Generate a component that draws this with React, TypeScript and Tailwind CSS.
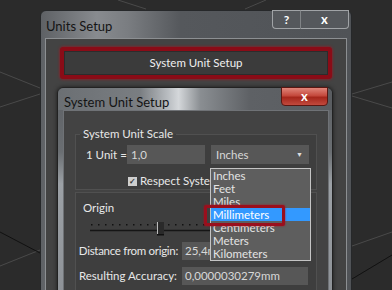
import React from 'react';

const font = { fontFamily: 'Lato, "Noto Sans", Arial, sans-serif' };

const Background: React.FC = () => (
    <svg className="absolute inset-0" width="392" height="290" viewBox="0 0 392 290">
        <g stroke="#4a4a4a" strokeWidth="1" fill="none">
            <line x1="118" y1="0" x2="146" y2="9" />
            <line x1="245" y1="9" x2="266" y2="0" />
            <line x1="0" y1="72" x2="40" y2="88" />
            <line x1="0" y1="107" x2="40" y2="94" />
            <line x1="0" y1="266" x2="40" y2="250" />
            <line x1="352" y1="94" x2="392" y2="82" />
            <line x1="352" y1="96" x2="392" y2="108" />
            <line x1="352" y1="246" x2="392" y2="232" />
        </g>
        <g stroke="#111" strokeWidth="1" fill="none">
            <line x1="0" y1="232" x2="40" y2="253" />
            <line x1="352" y1="279" x2="392" y2="255" />
        </g>
    </svg>
);

const Slider: React.FC = () => (
    <svg width="130" height="16" viewBox="0 0 130 16" className="block">
        {Array.from({ length: 18 }).map((_, i) => (
            <rect key={i} x={1 + i * 7} y={3} width={1.5} height={1.5} fill="#111" />
        ))}
        <line x1="0" y1="9.5" x2="130" y2="9.5" stroke="#151515" strokeWidth="1.5" />
        <rect x="67" y="1" width="7" height="13" fill="#2a2a2a" />
        <rect x="67" y="1" width="1" height="13" fill="#bbb" />
        <rect x="67" y="13" width="7" height="1.5" fill="#111" />
    </svg>
);

const App: React.FC = () => {
    const units = ['Inches', 'Feet', 'Miles', 'Millimeters', 'Centimeters', 'Meters', 'Kilometers'];

    return (
        <div className="relative w-[392px] h-[290px] overflow-hidden bg-[#2b2b2b]" style={font}>
            <Background />

            {/* Units Setup window */}
            <div className="absolute left-[40px] top-[10px] w-[312px] h-[290px] rounded-t-[6px] border border-[#26282a] bg-[linear-gradient(to_right,#5e6165_0%,#888b8f_18%,#7a7d81_28%,#55585c_45%,#505357_100%)] flex flex-col">
                <div className="h-[27px] flex items-start justify-between">
                    <span className="pl-[5px] pt-[7px] text-[13px] leading-[16px] text-[#141414]">Units Setup</span>
                    <div className="flex mr-[2px] -mt-px">
                        <div className="w-[29px] h-[19px] border border-[#a0a3a6] border-r-[#808386] rounded-bl-[4px] bg-[#55585c] flex items-center justify-center text-white text-[12px] font-bold leading-none">?</div>
                        <div className="w-[48px] h-[19px] border border-l-0 border-[#a0a3a6] rounded-br-[4px] bg-[#55585c] flex items-center justify-center text-white text-[13px] font-bold leading-none">x</div>
                    </div>
                </div>
                <div className="mx-[4px] flex-1 border border-[#8c8f92] bg-[#434343] pt-[8px] px-[14px]">
                    <div className="border-[4px] border-[#8a0c17] rounded-[3px] shadow-[0_0_3px_#b0101c]">
                        <div className="h-[24px] bg-[#3b3b3b] border border-[#2c2c2c] flex items-center justify-center text-[11.5px] text-[#f0f0f0]">System Unit Setup</div>
                    </div>
                </div>
            </div>

            {/* System Unit Setup window */}
            <div className="absolute left-[57px] top-[87px] w-[276px] h-[215px] rounded-t-[6px] border border-[#222] bg-[linear-gradient(to_bottom,#5d6064_0%,#6a6e72_30%,#9ca1a6_45%,#8d9196_100%)] flex flex-col shadow-[0_0_4px_rgba(0,0,0,0.6)]">
                <div className="h-[27px] flex items-start justify-between rounded-t-[6px] bg-[linear-gradient(to_right,#6b6f73_0%,#7a7e82_30%,#b8bcc0_40%,#d4d7da_44%,#8a8e92_52%,#5e6165_70%,#5a5d61_100%)]">
                    <span className="pl-[6px] pt-[6px] text-[13px] leading-[16px] text-[#141414]">System Unit Setup</span>
                    <div className="w-[47px] h-[19px] mr-[4px] -mt-px rounded-b-[4px] border border-[#5a1712] bg-[linear-gradient(to_bottom,#e0857a_0%,#c4483c_45%,#a5261b_55%,#c24a3e_100%)] flex items-center justify-center text-white text-[13px] font-bold leading-none">x</div>
                </div>
                <div className="ml-[5px] mr-[3px] flex-1 border border-[#6f7276] bg-[#434343] px-[11px] text-[11.5px] leading-[16px] text-[#e8e8e8]">
                    <fieldset className="mt-[15px] border border-[#505050] bg-[#3e3e3e] pl-[10px] pr-[6px] pb-[1px]">
                        <legend className="px-[3px] -ml-[6px]">System Unit Scale</legend>
                        <div className="flex items-center mt-[3px]">
                            <span className="w-[41px] whitespace-nowrap">1 Unit =</span>
                            <div className="w-[78px] h-[19px] bg-[#575757] flex items-center pl-[4px] text-[#d8d8d8]">1,0</div>
                            <div className="ml-[6px] w-[98px] h-[19px] bg-[#575757] flex items-center justify-between pl-[5px] pr-[6px] text-[#d8d8d8]">
                                <span>Inches</span>
                                <span className="text-[7px] leading-none text-[#ddd]">▼</span>
                            </div>
                        </div>
                        <div className="flex items-center ml-[42px] mt-[10px] h-[14px]">
                            <span className="w-[9px] h-[9px] bg-[#cfcfcf] flex items-center justify-center text-[8px] leading-none text-[#333] font-bold">✓</span>
                            <span className="ml-[3px] whitespace-nowrap">Respect System Units in Files</span>
                        </div>
                    </fieldset>
                    <div className="mt-[2px] h-[110px] border border-[#505050] bg-[#3e3e3e] pl-[4px] pt-[7px]">
                        <div className="pl-[3px]">Origin</div>
                        <div className="ml-[10px] mt-[5px]">
                            <Slider />
                        </div>
                        <div className="flex items-center mt-[5px]">
                            <span className="w-[102px] flex justify-end pr-[4px] whitespace-nowrap tracking-[-0.3px]">Distance from origin:</span>
                            <div className="w-[126px] h-[18px] bg-[#575757] flex items-center pl-[3px] text-[#d8d8d8]">25,4mm</div>
                        </div>
                        <div className="flex items-center mt-[7px]">
                            <span className="w-[102px] flex justify-end pr-[5px] whitespace-nowrap">Resulting Accuracy:</span>
                            <div className="w-[126px] h-[18px] bg-[#575757] flex items-center pl-[3px] text-[#d8d8d8]">0,0000030279mm</div>
                        </div>
                    </div>
                </div>
            </div>

            {/* Open dropdown list */}
            <div className="absolute left-[210px] top-[168px] w-[101px] border border-[#c4c4c4] bg-[#5e5e5e] text-[11.5px] leading-[13px] text-[#e4e4e4]">
                {units.map((u) => (
                    <div key={u} className={u === 'Millimeters' ? 'h-[13px] pl-[2px] bg-[#3399ff] text-white' : 'h-[13px] pl-[2px]'}>
                        {u}
                    </div>
                ))}
            </div>

            {/* Highlight around Millimeters */}
            <div className="absolute left-[204px] top-[205px] w-[81px] h-[21px] border-[3px] border-[#9a0f1d] rounded-[2px] shadow-[0_0_2px_#b0101c]" />
        </div>
    );
};

export default App;
